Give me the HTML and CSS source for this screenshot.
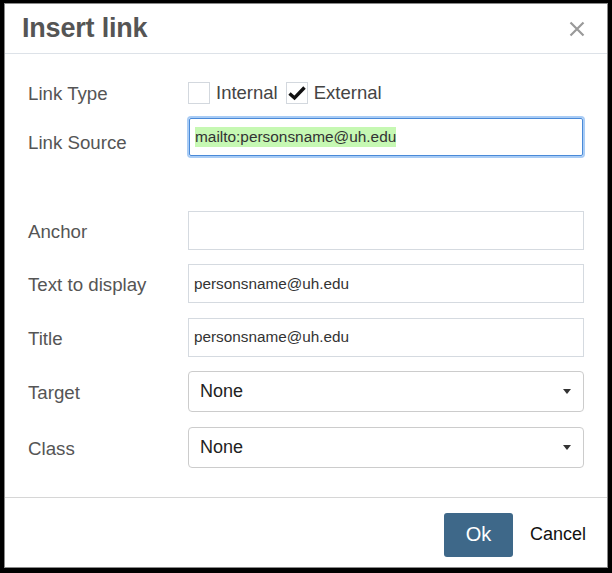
FILE: index.html
```html
<!DOCTYPE html>
<html>
<head>
<meta charset="utf-8">
<link rel="stylesheet" href="styles.css">
</head>
<body>
<div class="dialog">
  <div class="header">
    <h1 class="title">Insert link</h1>
    <span class="close" aria-label="Close">
      <svg width="16" height="16" viewBox="0 0 16 16"><path d="M1.5 1.5 L14.5 14.5 M14.5 1.5 L1.5 14.5" stroke="#9a9a9a" stroke-width="2.2" fill="none"/></svg>
    </span>
  </div>
  <div class="body">
    <div class="row row-type">
      <div class="label">Link Type</div>
      <div class="checks">
        <span class="box"></span><span class="check-text">Internal</span>
        <span class="box checked"><svg width="18" height="16" viewBox="0 0 18 16"><path d="M1.5 8.5 L6.5 13 L16.5 2.5" stroke="#111" stroke-width="3.4" fill="none"/></svg></span><span class="check-text">External</span>
      </div>
    </div>
    <div class="row row-source">
      <div class="label label-source">Link Source</div>
      <div class="input focus"><span class="hl">mailto:personsname@uh.edu</span></div>
    </div>
    <div class="row row-anchor">
      <div class="label">Anchor</div>
      <div class="input"></div>
    </div>
    <div class="row">
      <div class="label">Text to display</div>
      <div class="input small">personsname@uh.edu</div>
    </div>
    <div class="row">
      <div class="label">Title</div>
      <div class="input small">personsname@uh.edu</div>
    </div>
    <div class="row row-select">
      <div class="label">Target</div>
      <div class="select"><span>None</span><span class="caret"></span></div>
    </div>
    <div class="row row-select">
      <div class="label">Class</div>
      <div class="select"><span>None</span><span class="caret"></span></div>
    </div>
  </div>
  <div class="footer">
    <button class="ok">Ok</button>
    <button class="cancel">Cancel</button>
  </div>
</div>
</body>
</html>
```
FILE: styles.css
```css
html, body {
  margin: 0;
  padding: 0;
  background: #000;
  width: 612px;
  height: 573px;
  overflow: hidden;
}
body {
  padding: 3px 4px 0 4px;
  box-sizing: border-box;
  font-family: "Liberation Sans", Arial, sans-serif;
}
.dialog {
  width: 604px;
  height: 565px;
  box-sizing: border-box;
  border: 1px solid #8a8a8a;
  background: #fff;
  display: flex;
  flex-direction: column;
}
.header {
  height: 50px;
  box-sizing: border-box;
  border-bottom: 1px solid #dde2e8;
  display: flex;
  align-items: center;
  justify-content: space-between;
  padding: 0 22px 0 17px;
}
.title {
  margin: 0;
  font-size: 27px;
  font-weight: bold;
  color: #555;
  letter-spacing: -0.2px;
}
.close {
  display: flex;
  margin-top: 1px;
}
.body {
  flex: 1;
  padding: 0 23px 0 23px;
}
.row {
  display: grid;
  grid-template-columns: 160px 1fr;
  align-items: center;
  margin-top: 14.3px;
}
.label {
  font-size: 18.7px;
  color: #555;
  padding-top: 3px;
}
.label-source {
  padding-top: 11px;
}
.row-type {
  margin-top: 26px;
  height: 22px;
}
.row-source {
  margin-top: 16px;
}
.row-anchor {
  margin-top: 55px;
}
.checks {
  display: flex;
  align-items: center;
}
.box {
  width: 22px;
  height: 22px;
  box-sizing: border-box;
  border: 1px solid #d3d8de;
  display: flex;
  align-items: center;
  justify-content: center;
}
.check-text {
  font-size: 18.5px;
  color: #444;
  margin-left: 6px;
  margin-right: 8px;
}
.input {
  height: 39px;
  box-sizing: border-box;
  border: 1px solid #d5dae0;
  display: flex;
  align-items: center;
  padding: 0 5px;
  font-size: 15.3px;
  color: #333;
}
.input.focus {
  border: 1px solid #4a8ad8;
  box-shadow: 0 0 0 2px #a9ccf5;
  border-radius: 2px;
  margin: 0 1px;
  height: 38px;
  font-size: 15.4px;
}
.hl {
  background: #c6f8b3;
  color: #333;
  padding: 1px 0;
}
.select {
  height: 41px;
  box-sizing: border-box;
  border: 1px solid #ccc;
  border-radius: 4px;
  display: flex;
  align-items: center;
  justify-content: space-between;
  padding: 0 12px 0 11px;
  font-size: 18px;
  color: #222;
}
.row-select + .row-select {
  margin-top: 15px;
}
.caret {
  width: 0;
  height: 0;
  border-left: 4.5px solid transparent;
  border-right: 4.5px solid transparent;
  border-top: 5px solid #333;
}
.footer {
  height: 70px;
  box-sizing: border-box;
  border-top: 1px solid #d6d6d6;
  display: flex;
  align-items: center;
  justify-content: flex-end;
  padding: 0 21px 0 0;
}
.ok {
  width: 69px;
  height: 44px;
  background: #3e6889;
  color: #fff;
  border: none;
  border-radius: 3px;
  font-family: "Liberation Sans", Arial, sans-serif;
  font-size: 20px;
  margin-right: 17px;
  margin-top: 4px;
}
.cancel {
  background: none;
  border: none;
  padding: 0;
  font-family: "Liberation Sans", Arial, sans-serif;
  font-size: 18px;
  color: #111;
  margin-top: 4px;
}
```
